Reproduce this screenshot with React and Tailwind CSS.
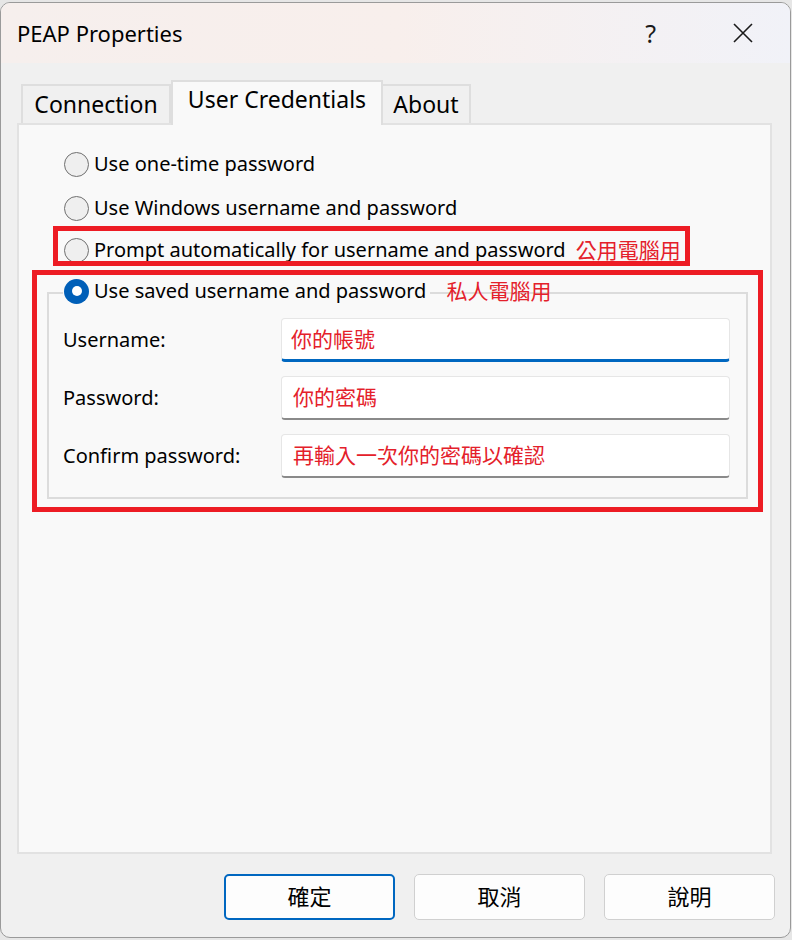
export default function App() {
  const Radio = ({ checked }) =>
    checked ? (
      <span className="w-[25px] h-[25px] rounded-full bg-[#005fb8] flex items-center justify-center shrink-0">
        <span className="w-[10px] h-[10px] rounded-full bg-white" />
      </span>
    ) : (
      <span className="w-[25px] h-[25px] rounded-full border-[1.5px] border-[#707070] bg-[#efefef] shrink-0" />
    );

  const Row = ({ h, children, label }) => (
    <div className={`flex items-center pl-[45px] ${h}`}>
      <Radio />
      <span className="ml-[5px] text-[20px] leading-none">{label}</span>
      {children}
    </div>
  );

  const Field = ({ label, value, focused }) => (
    <div className="flex items-center h-[44px]">
      <div className="w-[232px] pl-[14px] text-[20px] leading-none">{label}</div>
      <div
        className={
          focused
            ? "w-[449px] h-[44px] bg-white border border-[#e6e6e6] border-b-[3px] border-b-[#0067c0] rounded-[4px] flex items-center pl-[9px]"
            : "w-[449px] h-[44px] bg-white border border-[#e6e6e6] border-b-[2px] border-b-[#8a8a8a] rounded-[4px] flex items-center pl-[11px]"
        }
      >
        <span className="text-[21px] leading-none text-[#e4202a]">{value}</span>
      </div>
    </div>
  );

  return (
    <div className="relative w-[792px] h-[940px] bg-[#e6e6e6] pt-[2px] font-['Noto_Sans','Noto_Sans_CJK_TC',sans-serif] text-black">
      <div className="w-[791px] h-[936px] rounded-[10px] border border-[#9a9a9a] bg-[#f0f0f0] overflow-hidden flex flex-col">
        {/* Title bar */}
        <div className="h-[60px] shrink-0 flex items-center bg-linear-to-r from-[#f6efed] via-[#f8efec] to-[#f1f2f8] pl-[16px] pr-[37px]">
          <span className="text-[22px] leading-none">PEAP Properties</span>
          <span className="ml-auto text-[25px] leading-none text-[#1a1a1a]">?</span>
          <svg className="ml-[77px]" width="20" height="20" viewBox="0 0 20 20">
            <path d="M1 1 L19 19 M19 1 L1 19" stroke="#1a1a1a" strokeWidth="1.6" fill="none" />
          </svg>
        </div>

        {/* Body */}
        <div className="flex-1 pl-[16px]">
          {/* Tabs */}
          <div className="flex items-end mt-[17px] pl-[4px]">
            <div className="w-[150px] h-[39px] border-2 border-b-0 border-[#dedede] bg-[#f0f0f0] flex items-center justify-center text-[23px] leading-none">
              Connection
            </div>
            <div className="relative z-10 w-[212px] h-[45px] -mb-[2px] border-2 border-b-0 border-[#dedede] bg-[#f9f9f9] flex items-start justify-center pt-[6px] text-[23px] leading-none">
              User Credentials
            </div>
            <div className="w-[88px] h-[39px] border-2 border-b-0 border-l-0 border-[#dedede] bg-[#f0f0f0] flex items-center justify-center text-[23px] leading-none">
              About
            </div>
          </div>

          {/* Panel */}
          <div className="w-[755px] h-[731px] border-2 border-[#e2e2e2] bg-[#f9f9f9] pt-[17px]">
            <Row h="h-[44px]" label="Use one-time password" />
            <Row h="h-[44px]" label="Use Windows username and password" />
            <Row h="h-[40px]" label="Prompt automatically for username and password">
              <span className="ml-[10px] text-[21px] leading-none text-[#e4202a]">公用電腦用</span>
            </Row>

            {/* Group box */}
            <div className="relative ml-[28px] mt-[22px] w-[701px] h-[207px] border-2 border-[#dcdcdc]">
              <div className="absolute left-[14px] top-[-16px] flex items-center h-[26px]">
                <span className="flex items-center bg-[#f9f9f9] pl-[1px] pr-[4px]">
                  <Radio checked />
                  <span className="ml-[5px] text-[20px] leading-none">Use saved username and password</span>
                </span>
                <span className="ml-[16px] text-[21px] leading-none text-[#e4202a]">私人電腦用</span>
              </div>
              <div className="flex flex-col gap-[14px] pt-[24px]">
                <Field label="Username:" value="你的帳號" focused />
                <Field label="Password:" value="你的密碼" />
                <Field label="Confirm password:" value="再輸入一次你的密碼以確認" />
              </div>
            </div>
          </div>

          {/* Buttons */}
          <div className="flex gap-[19px] mt-[20px] ml-[207px]">
            <button className="w-[171px] h-[46px] pb-[4px] bg-[#fdfdfd] border-2 border-[#0067c0] rounded-[5px] text-[22px] leading-none font-['Noto_Sans_CJK_TC',sans-serif]">
              確定
            </button>
            <button className="w-[171px] h-[46px] pb-[4px] bg-[#fdfdfd] border border-[#d0d0d0] rounded-[5px] text-[22px] leading-none font-['Noto_Sans_CJK_TC',sans-serif]">
              取消
            </button>
            <button className="w-[171px] h-[46px] pb-[4px] bg-[#fdfdfd] border border-[#d0d0d0] rounded-[5px] text-[22px] leading-none font-['Noto_Sans_CJK_TC',sans-serif]">
              說明
            </button>
          </div>
        </div>
      </div>

      {/* Red annotation boxes */}
      <div className="absolute left-[53px] top-[226px] w-[637px] h-[40px] border-[5px] border-[#ed1c24] pointer-events-none" />
      <div className="absolute left-[32px] top-[270px] w-[731px] h-[242px] border-[5px] border-[#ed1c24] pointer-events-none" />
    </div>
  );
}
